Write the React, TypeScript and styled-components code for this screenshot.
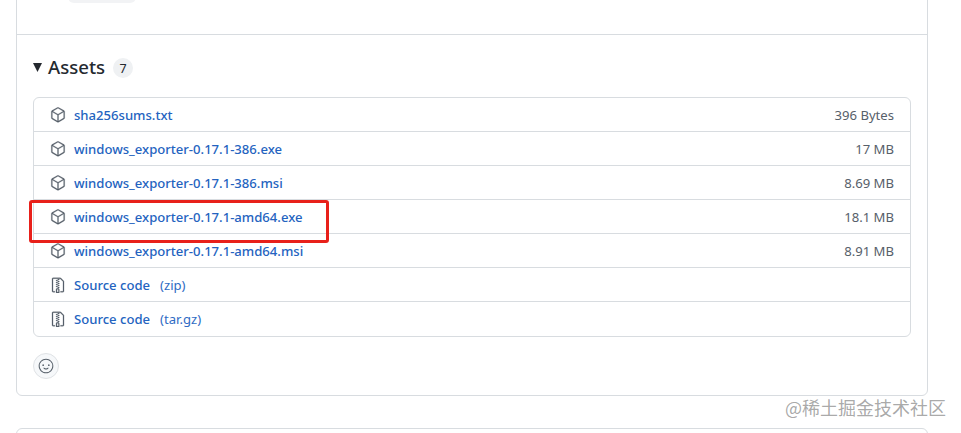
import { createGlobalStyle } from "styled-components";
import styled from "styled-components";
import { GoFileZip, GoPackage, GoSmiley } from "react-icons/go";

const GlobalStyle = createGlobalStyle`
  html, body {
    margin: 0;
    padding: 0;
    background: #fff;
    overflow: hidden;
  }
  body {
    font-family: "Noto Sans", "Open Sans", "Liberation Sans", sans-serif;
  }
`;

type Asset = {
  name: string;
  size?: string;
  suffix?: string;
  zip?: boolean;
};

const assets: Asset[] = [
  { name: "sha256sums.txt", size: "396 Bytes" },
  { name: "windows_exporter-0.17.1-386.exe", size: "17 MB" },
  { name: "windows_exporter-0.17.1-386.msi", size: "8.69 MB" },
  { name: "windows_exporter-0.17.1-amd64.exe", size: "18.1 MB" },
  { name: "windows_exporter-0.17.1-amd64.msi", size: "8.91 MB" },
  { name: "Source code", suffix: "(zip)", zip: true },
  { name: "Source code", suffix: "(tar.gz)", zip: true },
];

const App = () => {
  return (
    <>
      <GlobalStyle />
      <Page>
        <ReleaseCard>
          <TopBar>
            <CutOffChip />
          </TopBar>
          <CardBody>
            <AssetsHeader>
              <svg width="9" height="9" viewBox="0 0 9 9">
                <path d="M0 0h9L4.5 9z" fill="#24292f" />
              </svg>
              <AssetsTitle>Assets</AssetsTitle>
              <Counter>7</Counter>
            </AssetsHeader>
            <AssetList>
              {assets.map((asset, i) => (
                <AssetRow key={i}>
                  <AssetIcon>
                    {asset.zip ? <GoFileZip size={16} /> : <GoPackage size={16} />}
                  </AssetIcon>
                  <AssetName>{asset.name}</AssetName>
                  {asset.suffix && <Suffix>{asset.suffix}</Suffix>}
                  {asset.size && <Size>{asset.size}</Size>}
                </AssetRow>
              ))}
            </AssetList>
            <ReactionButton>
              <GoSmiley size={16} />
            </ReactionButton>
          </CardBody>
        </ReleaseCard>
        <NextCard />
        <RedMark />
        <Watermark>@稀土掘金技术社区</Watermark>
      </Page>
    </>
  );
};

const Page = styled.div`
  position: relative;
  width: 961px;
  height: 433px;
  overflow: hidden;
  padding: 0 33px 0 16px;
  box-sizing: border-box;
`;

const ReleaseCard = styled.div`
  margin-top: -20px;
  border: 1px solid #d8dce0;
  border-radius: 6px;
  background: #fff;
`;

const TopBar = styled.div`
  height: 53px;
  border-bottom: 1px solid #d8dce0;
  padding-left: 51px;
`;

const CutOffChip = styled.div`
  width: 68px;
  height: 22px;
  background: #f2f3f5;
  border-radius: 6px;
`;

const CardBody = styled.div`
  padding: 16px 16px 16px;
`;

const AssetsHeader = styled.div`
  display: flex;
  align-items: center;
  height: 32px;
  margin-bottom: 14px;
`;

const AssetsTitle = styled.span`
  margin-left: 6px;
  font-size: 18.6px;
  font-weight: 500;
  color: #24292f;
  line-height: 32px;
`;

const Counter = styled.span`
  display: flex;
  align-items: center;
  justify-content: center;
  width: 20px;
  height: 20px;
  margin: 2px 0 0 8px;
  border-radius: 50%;
  background: #eff1f3;
  color: #24292f;
  font-size: 12.5px;
`;

const AssetList = styled.div`
  border: 1px solid #d8dce0;
  border-radius: 6px;
  padding-bottom: 1px;
  margin-bottom: 16px;
`;

const AssetRow = styled.div`
  display: flex;
  align-items: center;
  height: 33px;
  padding: 0 16px;
  border-top: 1px solid #d8dce0;

  &:first-child {
    border-top: 0;
  }
`;

const AssetIcon = styled.span`
  display: flex;
  width: 16px;
  margin-right: 8px;
  color: #57606a;

  svg {
    stroke-width: 0.4px;
  }
`;

const AssetName = styled.span`
  font-size: 13.1px;
  font-weight: 500;
  color: #2463c0;
`;

const Suffix = styled.span`
  margin-left: 10px;
  font-size: 13.1px;
  color: #2f6bc4;
`;

const Size = styled.span`
  margin-left: auto;
  font-size: 13.1px;
  color: #57606a;
`;

const ReactionButton = styled.div`
  display: flex;
  align-items: center;
  justify-content: center;
  width: 26px;
  height: 26px;
  box-sizing: border-box;
  border: 1px solid #dfe2e5;
  border-radius: 50%;
  background: #f6f8fa;
  color: #57606a;
`;

const NextCard = styled.div`
  height: 40px;
  margin-top: 32px;
  border: 1px solid #d8dce0;
  border-radius: 6px;
`;

const RedMark = styled.div`
  position: absolute;
  left: 29px;
  top: 200px;
  width: 300px;
  height: 43px;
  box-sizing: border-box;
  border: 3px solid #e8201a;
  border-radius: 3px;
`;

const Watermark = styled.div`
  position: absolute;
  right: 15px;
  top: 396px;
  font-family: "Noto Sans CJK SC", "Noto Sans", sans-serif;
  font-size: 18px;
  line-height: 22px;
  color: rgba(120, 120, 120, 0.65);
`;

export default App;
